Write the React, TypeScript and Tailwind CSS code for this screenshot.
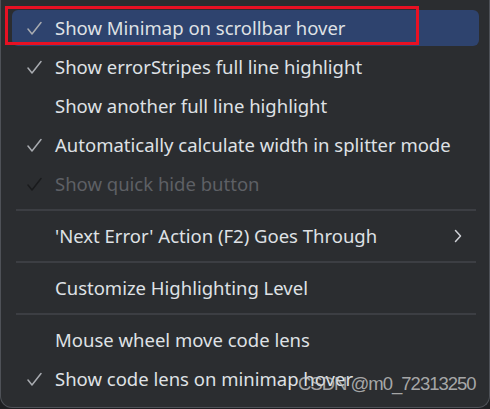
type Item =
  | { kind: 'item'; label: string; checked?: boolean; disabled?: boolean; active?: boolean; submenu?: boolean }
  | { kind: 'sep' };

const items: Item[] = [
  { kind: 'item', label: 'Show Minimap on scrollbar hover', checked: true, active: true },
  { kind: 'item', label: 'Show errorStripes full line highlight', checked: true },
  { kind: 'item', label: 'Show another full line highlight' },
  { kind: 'item', label: 'Automatically calculate width in splitter mode', checked: true },
  { kind: 'item', label: 'Show quick hide button', checked: true, disabled: true },
  { kind: 'sep' },
  { kind: 'item', label: "'Next Error' Action (F2) Goes Through", submenu: true },
  { kind: 'sep' },
  { kind: 'item', label: 'Customize Highlighting Level' },
  { kind: 'sep' },
  { kind: 'item', label: 'Mouse wheel move code lens' },
  { kind: 'item', label: 'Show code lens on minimap hover', checked: true },
];

function Check({ dim }: { dim?: boolean }) {
  return (
    <svg width="15" height="15" viewBox="0 0 15 15" fill="none">
      <path
        d="M1 8 L5 13 L14 1.5"
        stroke={dim ? '#1a1b1d' : '#a8abb0'}
        strokeWidth="1.5"
        strokeLinecap="round"
        strokeLinejoin="round"
      />
    </svg>
  );
}

export default function App() {
  return (
    <div className="relative w-[490px] h-[409px] bg-[#1e1f22] overflow-hidden" style={{ fontFamily: '"Noto Sans", "Open Sans", sans-serif' }}>
      <div className="h-[408px] border-x border-b border-[#4e5157] rounded-b-[12px] bg-[#2b2d30] pt-[8.5px] pl-[11px] pr-[10px]">
        {items.map((it, i) =>
          it.kind === 'sep' ? (
            <div key={i} className="h-[13px] pt-[5px] pl-[4px] pr-[3px]">
              <div className="h-[2px] bg-[#3c3e43]" />
            </div>
          ) : (
            <div key={i} className="h-[39px] py-[1.5px]">
              <div
                className={`h-full flex items-center rounded-[6px] pl-[15px] pr-[16px] ${
                  it.active ? 'bg-[#2e436e]' : ''
                }`}
              >
                <div className="w-[28px] flex items-center">
                  {it.checked && <Check dim={it.disabled} />}
                </div>
                <span
                  className={`flex-1 text-[18.5px] leading-none whitespace-nowrap ${
                    it.disabled ? 'text-[#5e6065]' : 'text-[#dfe1e5]'
                  }`}
                >
                  {it.label}
                </span>
                {it.submenu && (
                  <svg width="8" height="14" viewBox="0 0 8 14" fill="none" className="mr-[1px]">
                    <path d="M1.5 1.5 L6.5 7 L1.5 12.5" stroke="#ced0d6" strokeWidth="1.5" strokeLinecap="round" strokeLinejoin="round" />
                  </svg>
                )}
              </div>
            </div>
          )
        )}
      </div>
      {/* screenshot annotation */}
      <div className="absolute left-[5px] top-[6px] w-[414px] h-[39px] border-[3px] border-[#e81123]" />
      <div
        className="absolute left-[298px] top-[372px] text-[18.5px] leading-[24px] tracking-[-1px] text-[#c8c8c8]/80 whitespace-nowrap"
        style={{ fontFamily: '"Liberation Sans", Arial, sans-serif' }}
      >
        CSDN @m0_72313250
      </div>
    </div>
  );
}
